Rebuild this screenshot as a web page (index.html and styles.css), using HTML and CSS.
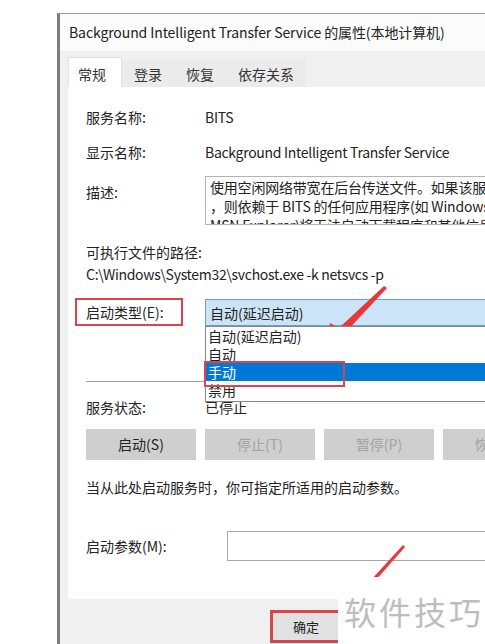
FILE: index.html
```html
<html>
<head>
<meta charset="utf-8">
<link rel="stylesheet" href="styles.css">
<title>BITS 的属性</title>
</head>
<body>
<div class="window">
  <div class="titlebar">Background Intelligent Transfer Service 的属性(本地计算机)</div>
  <div class="tabs">
    <span class="tab active">常规</span>
    <span class="tab">登录</span>
    <span class="tab">恢复</span>
    <span class="tab">依存关系</span>
  </div>
  <div class="panel">
    <div class="row r-name"><span class="label">服务名称:</span><span class="latin">BITS</span></div>
    <div class="row r-disp"><span class="label">显示名称:</span><span class="latin">Background Intelligent Transfer Service</span></div>
    <div class="row r-desc">
      <span class="label">描述:</span>
      <div class="desc">使用空闲网络带宽在后台传送文件。如果该服务被禁用<br>，则依赖于 BITS 的任何应用程序(如 Windows 更新<br>MSN Explorer)将无法自动下载程序和其他信息。</div>
    </div>
    <div class="path-label">可执行文件的路径:</div>
    <div class="path latin">C:\Windows\System32\svchost.exe -k netsvcs -p</div>
    <div class="row r-type">
      <span class="label boxed">启动类型(E):</span>
      <div class="combo">
        <div class="combo-value">自动(延迟启动)</div>
        <ul class="droplist">
          <li>自动(延迟启动)</li>
          <li>自动</li>
          <li class="sel">手动</li>
          <li>禁用</li>
        </ul>
      </div>
    </div>
    <hr class="sep">
    <div class="row r-status"><span class="label">服务状态:</span><span>已停止</span></div>
    <div class="buttons">
      <span class="btn">启动(S)</span>
      <span class="btn off">停止(T)</span>
      <span class="btn off">暂停(P)</span>
      <span class="btn off">恢复(R)</span>
    </div>
    <div class="hint">当从此处启动服务时，你可指定所适用的启动参数。</div>
    <div class="row r-param"><span class="label">启动参数(M):</span><div class="input"></div></div>
  </div>
  <div class="footer">
    <span class="ok">确定</span>
  </div>
</div>

<!-- red arrows drawn over the screenshot -->
<svg class="arrow a1" width="72" height="70" viewBox="0 0 72 70">
  <path d="M64 3 L67 5 L25 50 L32 55 L7 63 L10 40 L19 45 Z" fill="#e8383d"/>
</svg>
<svg class="arrow a2" width="60" height="58" viewBox="0 0 60 58">
  <path d="M52 2 L54 4 L24 38 L29 44 L4 54 L12 35 L19 38 Z" fill="#e8383d"/>
</svg>
<div class="watermark">软件技巧</div>
</body>
</html>
```

FILE: styles.css
```css
/* page */
* {box-sizing: border-box;}

body {
  margin: 0;
  background: #fff;
  font-family: "Segoe UI", "Noto Sans CJK SC", sans-serif;
  font-size: 14px;
  color: #222;
  overflow: hidden;
  width: 485px;
  height: 644px;
  position: relative;
}

.latin {
  letter-spacing: -0.3px;
}

.window {
  margin: 13px 0 0 57px;
  border-left: 3px solid #7d7d7d;
  border-top: 1px solid #9a9a9a;
  background: #f0f0f0;
  height: 640px;
}

.titlebar {
  background: #fbfbfb;
  height: 37px;
  padding: 8px 0 0 9px;
  font-size: 14px;
  letter-spacing: -0.1px;
  color: #222;
  white-space: nowrap;
}

/* tabs */
.tabs {
  display: flex;
  padding: 8px 0 0 8px;
  height: 36px;
  align-items: flex-end;
}

.tab {
  height: 27px;
  padding: 4px 12px 0 12px;
  background: #ebebeb;
  color: #333;
}

.tab.active {
  background: #fff;
  height: 30px;
  padding: 6px 15px 0 9px;
  border: 1px solid #e2e2e2;
  border-bottom: none;
}

.panel {
  margin-left: 8px;
  background: #fff;
  height: 512px;
  padding: 20px 0 0 18px;
  position: relative;
}

/* rows */
.row {
  display: flex;
  align-items: center;
}

.label {
  width: 119px;
  flex: none;
}

.r-disp { margin-top: 15px; }

.r-desc {
  margin-top: 14px;
  align-items: flex-start;
}

.r-desc .label { padding-top: 6px; }

.desc {
  flex: 1;
  height: 49px;
  overflow: hidden;
  border: 1px solid #b4b4b4;
  border-right: none;
  padding: 1px 0 0 4px;
  line-height: 19px;
  white-space: nowrap;
  letter-spacing: -0.2px;
}

.path-label { margin-top: 17px; }
.path { margin-top: 2px; }

.r-type { margin-top: 14px; }

.boxed {
  width: 108px;
  margin: 0 22px 0 -11px;
  padding: 2px 0 2px 9px;
  border: 2px solid #d9454d;
}

.combo {
  flex: 1;
  position: relative;
}

.combo-value {
  height: 27px;
  background: #cce4f7;
  border: 1px solid #6aa0cf;
  border-right: none;
  padding: 3px 0 0 4px;
}

.droplist {
  position: absolute;
  left: 0;
  right: 0;
  top: 27px;
  margin: 0;
  padding: 0 0 2px 0;
  list-style: none;
  background: #fff;
  border: 1px solid #888;
  border-right: none;
  line-height: 18px;
  z-index: 2;
}

.droplist li {
  padding-left: 2px;
}

.droplist li.sel {
  background: #0078d7;
  color: #fff;
  position: relative;
}

.droplist li.sel::after {
  content: "";
  position: absolute;
  left: -2px;
  top: -2px;
  width: 137px;
  height: 22px;
  border: 2px solid #d9454d;
}

.sep {
  margin: 55px 0 0 0;
  width: 130px;
  border: none;
  border-top: 1px solid #a0a0a0;
}

.r-status { margin-top: 15px; }

.buttons {
  display: flex;
  gap: 9px;
  margin-top: 12px;
}

.btn {
  width: 110px;
  height: 31px;
  background: #cfcfcf;
  text-align: center;
  padding-top: 5px;
  flex: none;
}

.btn.off {
  color: #a2a2a2;
}

.hint { margin-top: 17px; }

.r-param { margin-top: 34px; }
.r-param .label { width: 141px; }

.input {
  flex: 1;
  height: 30px;
  border: 1px solid #a8a8a8;
  border-right: none;
}

/* bottom buttons */
.footer {
  padding: 11px 0 0 210px;
}

.ok {
  display: inline-block;
  width: 72px;
  height: 33px;
  background: #e1e1e1;
  border: 3px solid #d9454d;
  text-align: center;
  padding-top: 4px;
  font-size: 13px;
}

/* overlays */
.arrow {
  position: absolute;
}

.a1 { left: 320px; top: 283px; }
.a2 { left: 351px; top: 543px; }

.watermark {
  position: absolute;
  left: 338px;
  top: 577px;
  width: 147px;
  height: 67px;
  background: #fff;
  color: #bdbdbd;
  font-size: 32px;
  padding: 11px 0 0 6px;
  letter-spacing: 3px;
  white-space: nowrap;
}
```
